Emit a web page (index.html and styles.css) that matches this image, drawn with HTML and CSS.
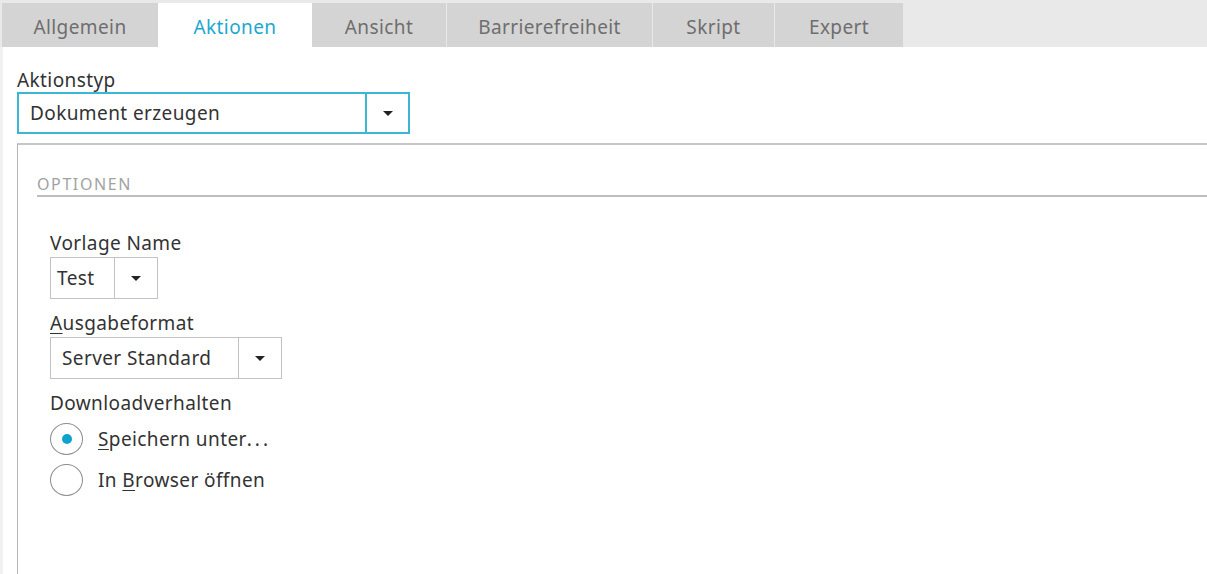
FILE: index.html
```html
<!DOCTYPE html>
<html lang="de">
<head>
  <meta charset="UTF-8">
  <title>Aktionen</title>
  <link rel="stylesheet" href="styles.css">
</head>
<body>

<div class="tabs">
  <div class="tab tab-allgemein">Allgemein</div>
  <div class="tab tab-aktionen active">Aktionen</div>
  <div class="tab tab-ansicht">Ansicht</div>
  <div class="tab tab-barriere">Barrierefreiheit</div>
  <div class="tab tab-skript">Skript</div>
  <div class="tab tab-expert">Expert</div>
</div>

<div class="main">
  <div class="label">Aktionstyp</div>
  <div class="select select-focus select-type">
    <span class="select-value">Dokument erzeugen</span>
    <span class="select-btn"><span class="caret"></span></span>
  </div>

  <div class="panel">
    <div class="section-title">OPTIONEN</div>

    <div class="fields">
      <div class="label">Vorlage Name</div>
      <div class="select select-template">
        <span class="select-value">Test</span>
        <span class="select-btn"><span class="caret"></span></span>
      </div>

      <div class="label label-gap"><u>A</u>usgabeformat</div>
      <div class="select select-format">
        <span class="select-value">Server Standard</span>
        <span class="select-btn"><span class="caret"></span></span>
      </div>

      <div class="label label-gap">Downloadverhalten</div>
      <div class="radios">
        <label class="radio checked"><span class="circle"></span><span><u>S</u>peichern unter<span class="dots">...</span></span></label>
        <label class="radio"><span class="circle"></span><span>In <u>B</u>rowser öffnen</span></label>
      </div>
    </div>
  </div>
</div>

</body>
</html>
```

FILE: styles.css
```css
* { margin: 0; padding: 0; box-sizing: border-box; }
html, body { height: 100%; overflow: hidden; }
body {
  font-family: "Noto Sans", "Open Sans", sans-serif;
  font-size: 19px;
  letter-spacing: 0.4px;
  color: #333;
  background: #fff;
}

/* tab strip */
.tabs {
  display: flex;
  height: 47px;
  padding: 3px 0 0 2px;
  background: #e9e9e9;
}
.tab {
  display: flex;
  align-items: center;
  justify-content: center;
  height: 44px;
  padding-top: 3px;
  margin-right: 1px;
  background: #d4d4d4;
  color: #6e6e6e;
}
.tab.active { background: #fff; color: #1ba8cf; }
.tab-allgemein { width: 156px; margin-right: 0; }
.tab-aktionen { width: 154px; margin-right: 0; }
.tab-ansicht { width: 134px; }
.tab-barriere { width: 205px; }
.tab-skript { width: 121px; }
.tab-expert { width: 128px; }

/* page body */
.main {
  height: calc(100% - 47px);
  padding: 21px 0 0 14px;
  border-left: 3px solid #f1f1f1;
}

.label { line-height: 24px; }
.label u { text-decoration-thickness: 1px; text-underline-offset: 3px; }
.label-gap { margin-top: 12px; }

/* dropdowns */
.select {
  display: flex;
  height: 42px;
  margin-top: 2px;
  border: 1px solid #c2c2c2;
  background: #fff;
}
.select-value {
  flex: 1;
  display: flex;
  align-items: center;
  padding-left: 6px;
}
.select-btn {
  display: flex;
  align-items: center;
  justify-content: center;
  width: 43px;
  border-left: 1px solid #c2c2c2;
}
.caret {
  width: 0;
  height: 0;
  border-left: 5px solid transparent;
  border-right: 5px solid transparent;
  border-top: 5px solid #222;
}

.select-focus { border: 2px solid #3bb6d5; }
.select-focus .select-btn { border-left: 2px solid #3bb6d5; }
.select-type { width: 393px; margin-top: 0; }
.select-type .select-value { padding-left: 11px; }
.select-template { width: 108px; }
.select-format { width: 232px; }
.select-format .select-value { padding-left: 11px; }

/* options panel */
.panel {
  height: 100%;
  margin-top: 9px;
  padding: 29px 0 0 19px;
  border-top: 2px solid #c6c6c6;
  border-left: 1px solid #b4b4b4;
}
.section-title {
  line-height: 20px;
  padding-bottom: 1px;
  border-bottom: 2px solid #bdbdbd;
  font-size: 16px;
  letter-spacing: 1.6px;
  color: #a2a2a2;
}
.fields { padding: 34px 0 0 13px; }

/* radio buttons */
.radios { display: flex; flex-direction: column; gap: 9px; margin-top: 8px; }
.radio { display: flex; align-items: center; gap: 15px; }
.radio u { text-decoration-thickness: 1px; text-underline-offset: 3px; }
.radio .dots { letter-spacing: 3px; }
.circle {
  display: flex;
  align-items: center;
  justify-content: center;
  width: 33px;
  height: 32px;
  border: 1.5px solid #8c8c8c;
  border-radius: 50%;
}
.radio.checked .circle::after {
  content: "";
  width: 10px;
  height: 10px;
  border-radius: 50%;
  background: #0ea3cc;
}
```
